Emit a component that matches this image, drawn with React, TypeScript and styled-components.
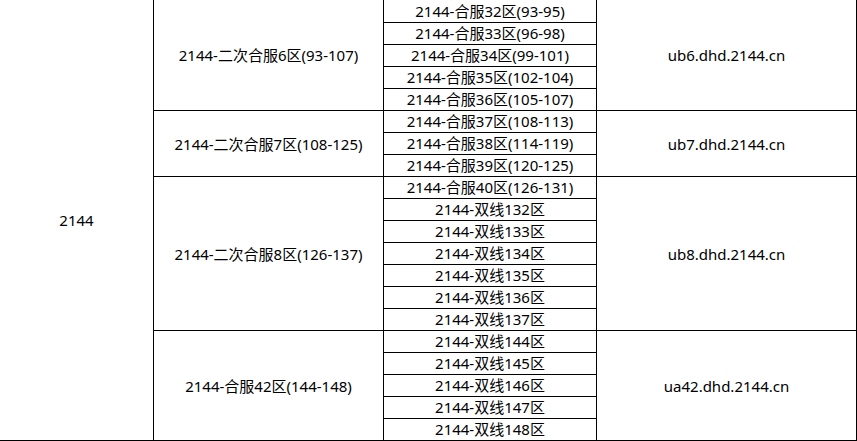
import { FC } from "react";
import styled, { createGlobalStyle } from "styled-components";

interface Group {
  name: string;
  domain: string;
  servers: string[];
}

const groups: Group[] = [
  {
    name: "2144-二次合服6区(93-107)",
    domain: "ub6.dhd.2144.cn",
    servers: [
      "2144-合服32区(93-95)",
      "2144-合服33区(96-98)",
      "2144-合服34区(99-101)",
      "2144-合服35区(102-104)",
      "2144-合服36区(105-107)",
    ],
  },
  {
    name: "2144-二次合服7区(108-125)",
    domain: "ub7.dhd.2144.cn",
    servers: [
      "2144-合服37区(108-113)",
      "2144-合服38区(114-119)",
      "2144-合服39区(120-125)",
    ],
  },
  {
    name: "2144-二次合服8区(126-137)",
    domain: "ub8.dhd.2144.cn",
    servers: [
      "2144-合服40区(126-131)",
      "2144-双线132区",
      "2144-双线133区",
      "2144-双线134区",
      "2144-双线135区",
      "2144-双线136区",
      "2144-双线137区",
    ],
  },
  {
    name: "2144-合服42区(144-148)",
    domain: "ua42.dhd.2144.cn",
    servers: [
      "2144-双线144区",
      "2144-双线145区",
      "2144-双线146区",
      "2144-双线147区",
      "2144-双线148区",
    ],
  },
];

const totalRows = groups.reduce((n, g) => n + g.servers.length, 0);

const App: FC = () => {
  let rowIndex = 0;

  return (
    <>
      <GlobalStyle />
      <Table>
        <colgroup>
          <Col $width={153} />
          <Col $width={230} />
          <Col $width={213} />
          <Col $width={261} />
        </colgroup>
        <tbody>
          {groups.map((group) =>
            group.servers.map((server, i) => {
              const first = rowIndex === 0;
              rowIndex++;
              return (
                <tr key={server}>
                  {first && <PlatformCell rowSpan={totalRows}>2144</PlatformCell>}
                  {i === 0 && (
                    <GroupCell rowSpan={group.servers.length} $first={first}>
                      {group.name}
                    </GroupCell>
                  )}
                  <ServerCell $first={first}>{server}</ServerCell>
                  {i === 0 && (
                    <DomainCell rowSpan={group.servers.length} $first={first}>
                      {group.domain}
                    </DomainCell>
                  )}
                </tr>
              );
            })
          )}
        </tbody>
      </Table>
    </>
  );
};

export default App;

const GlobalStyle = createGlobalStyle`
  html, body {
    margin: 0;
    padding: 0;
    background: #ffffff;
    overflow: hidden;
  }
  body {
    font-family: "Noto Sans", "Noto Sans CJK SC", sans-serif;
    font-size: 15px;
    color: #000000;
  }
`;

const Table = styled.table`
  border-collapse: separate;
  border-spacing: 0;
  table-layout: fixed;
  width: 857px;
  border-bottom: 1px solid #000;
`;

const Col = styled.col<{ $width: number }>`
  width: ${(p) => p.$width}px;
`;

const Cell = styled.td<{ $first?: boolean }>`
  padding: 0;
  text-align: center;
  vertical-align: middle;
  white-space: nowrap;
  line-height: 20px;
  border-top: ${(p) => (p.$first ? "none" : "1px solid #000")};
`;

const PlatformCell = styled(Cell)`
  border-top: none;
`;

const GroupCell = styled(Cell)`
  border-left: 1px solid #000;
`;

const ServerCell = styled(Cell)`
  border-left: 1px solid #000;
  height: ${(p) => (p.$first ? "22px" : "21px")};
  line-height: ${(p) => (p.$first ? "22px" : "21px")};
  box-sizing: content-box;
`;

const DomainCell = styled(Cell)`
  border-left: 1px solid #000;
  border-right: 1px solid #000;
`;
